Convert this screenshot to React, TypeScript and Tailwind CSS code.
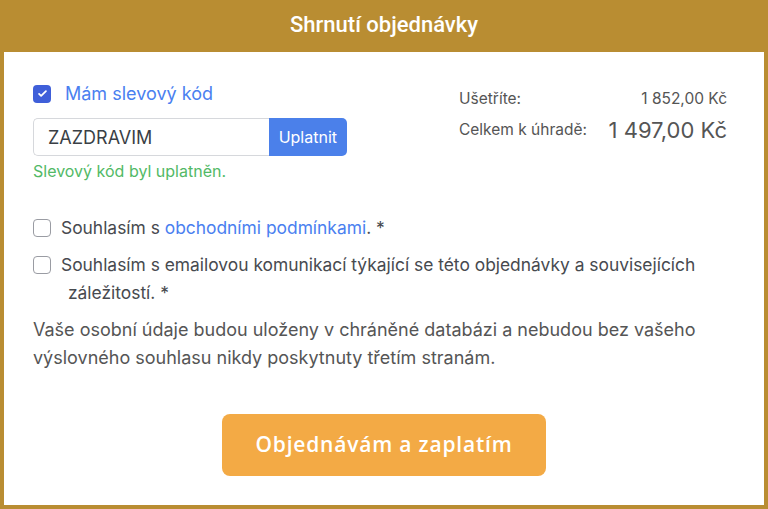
import React from 'react';

const Check = ({ checked }: { checked?: boolean }) =>
  checked ? (
    <span className="flex h-[18px] w-[18px] shrink-0 items-center justify-center rounded-[4px] bg-[#3f5fd9]">
      <svg viewBox="0 0 16 16" className="h-[11px] w-[11px]" fill="none" stroke="white" strokeWidth="2.6" strokeLinecap="round" strokeLinejoin="round">
        <path d="M3 8.5l3 3 7-7" />
      </svg>
    </span>
  ) : (
    <span className="block h-[18px] w-[18px] shrink-0 rounded-[4px] border border-[#9a9ca3] bg-white" />
  );

const App = () => {
  return (
    <div className="flex h-[509px] w-[768px] flex-col bg-[#b98d32] px-[4px] pb-[4px] font-['Inter','Liberation_Sans',sans-serif]">
      <div className="flex h-[52px] shrink-0 items-center justify-center pb-[3px]">
        <h1 className="font-['Roboto',sans-serif] text-[22px] font-medium text-white">Shrnutí objednávky</h1>
      </div>
      <div className="flex flex-1 flex-col bg-white px-[29px] pt-[28px]">
        <div className="flex items-start justify-between">
          <div className="flex flex-col">
            <label className="flex items-center gap-[14px] leading-[27px]">
              <Check checked />
              <span className="text-[18px] text-[#4a80f0]">Mám slevový kód</span>
            </label>
            <div className="mt-[11px] flex h-[38px] w-[314px]">
              <div className="flex flex-1 items-center rounded-l-[5px] border border-r-0 border-[#d6d8dc] px-[14px] text-[18px] text-[#3a3f45]">
                ZAZDRAVIM
              </div>
              <button className="rounded-r-[5px] bg-[#4b80ea] px-[10px] text-[16px] text-white">Uplatnit</button>
            </div>
            <p className="mt-[3px] text-[16px] leading-[24px] text-[#52b966]">Slevový kód byl uplatněn.</p>
          </div>
          <div className="mr-[8px] mt-[7px] grid w-[268px] grid-cols-[auto_auto] items-center justify-between whitespace-nowrap text-[#555]">
            <span className="text-[15.5px] leading-[24px]">Ušetříte:</span>
            <span className="text-right text-[15.5px] leading-[24px]">1 852,00 Kč</span>
            <span className="mt-[4px] text-[15.5px] leading-[30px]">Celkem k úhradě:</span>
            <span className="mt-[4px] text-right text-[22px] leading-[30px]">1 497,00 Kč</span>
          </div>
        </div>

        <div className="mt-[32px] flex flex-col gap-[10px] text-[17.4px] text-[#474a4f]">
          <label className="flex items-start gap-[10px] leading-[26px]">
            <span className="mt-[4px]"><Check /></span>
            <span>
              Souhlasím s <span className="text-[#4a80f0]">obchodními podmínkami</span>. *
            </span>
          </label>
          <label className="flex items-start gap-[10px] leading-[28px]">
            <span className="mt-[5px]"><Check /></span>
            <span className="pr-[10px]">
              Souhlasím s emailovou komunikací týkající se této objednávky a souvisejících
              <br />
              <span className="pl-[7px]">záležitostí. *</span>
            </span>
          </label>
        </div>

        <p className="mt-[9px] text-[18px] leading-[28px] text-[#555]">
          Vaše osobní údaje budou uloženy v chráněné databázi a nebudou bez vašeho
          <br />
          výslovného souhlasu nikdy poskytnuty třetím stranám.
        </p>

        <div className="mt-[42px] flex justify-center">
          <button className="h-[62px] w-[324px] rounded-[8px] bg-[#f3aa45] font-['Open_Sans',sans-serif] text-[21px] font-semibold tracking-[0.8px] text-white">
            Objednávám a zaplatím
          </button>
        </div>
      </div>
    </div>
  );
};

export default App;
